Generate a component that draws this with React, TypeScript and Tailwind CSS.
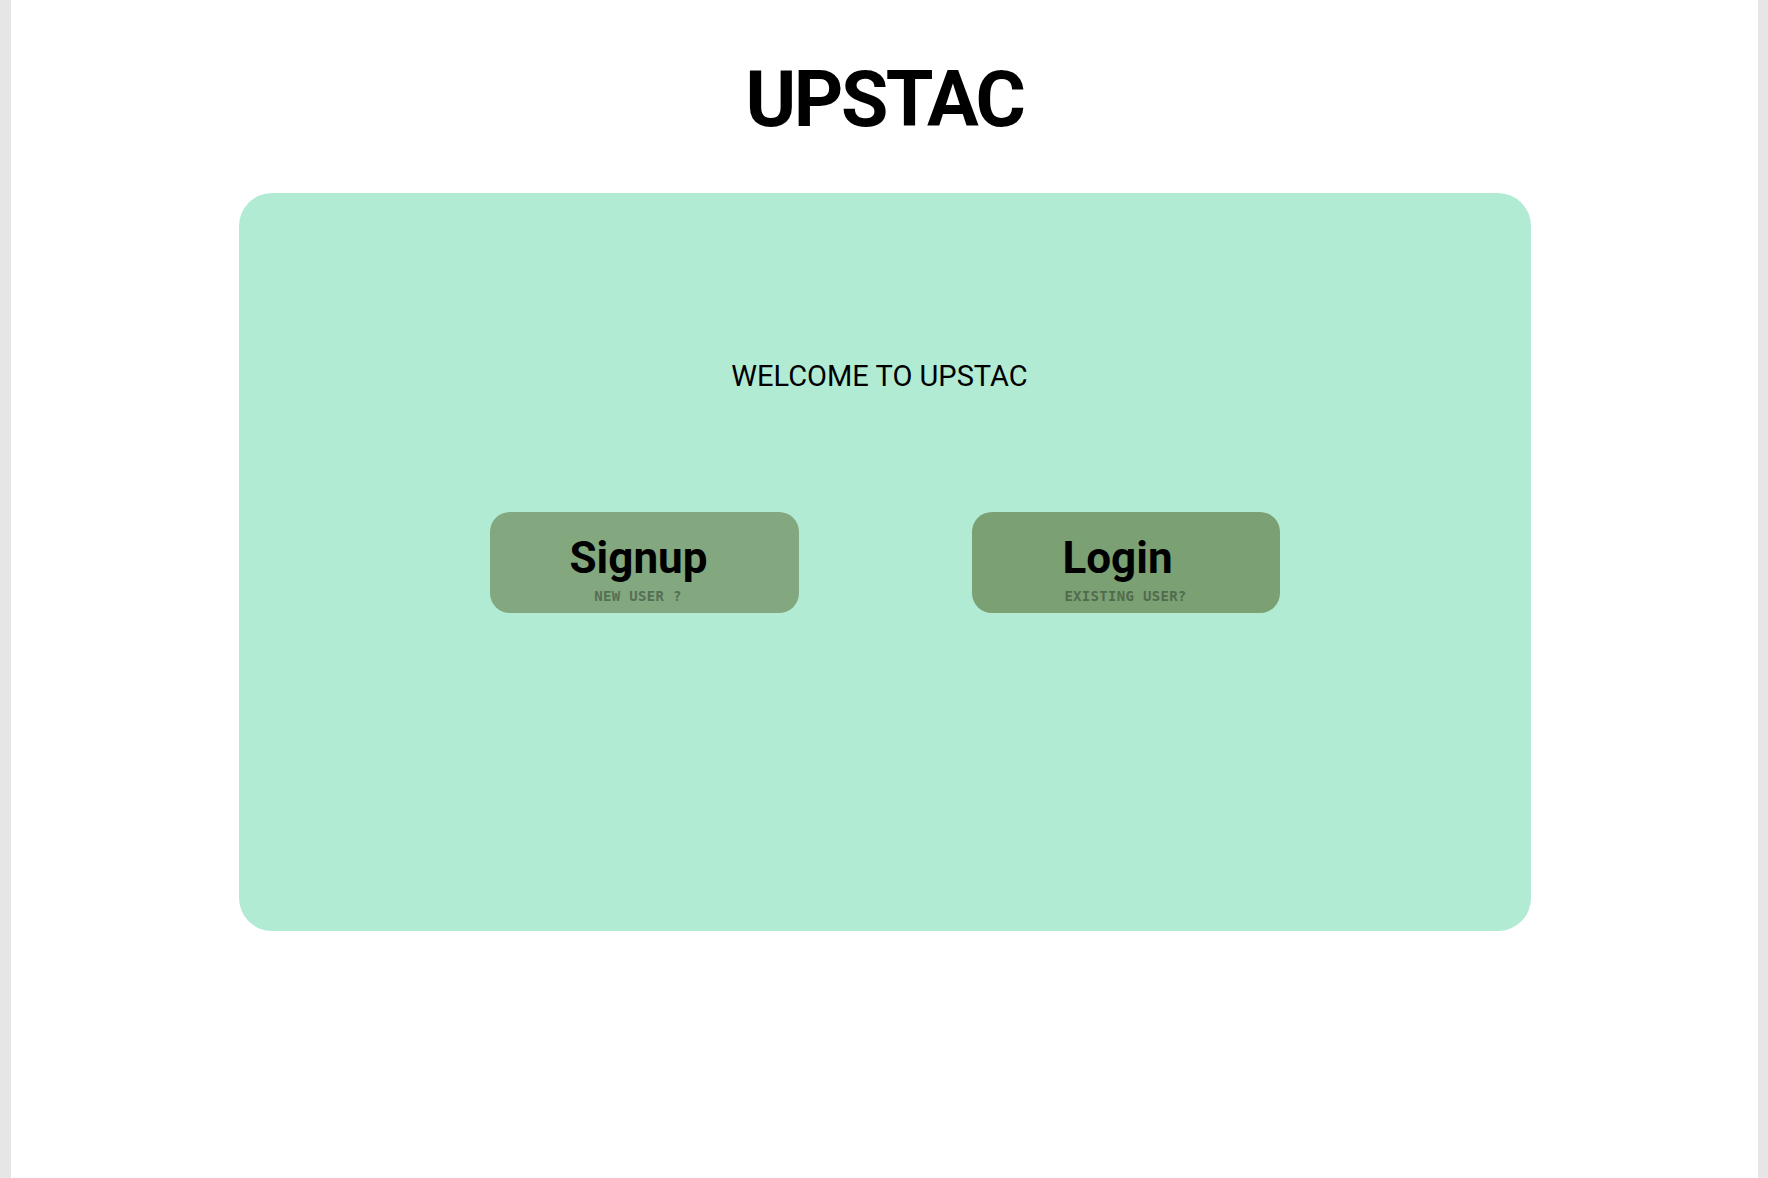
import React from "react";

export default function App() {
  return (
    <div className="flex h-[1178px] w-full bg-white" style={{ fontFamily: "Roboto, 'Liberation Sans', sans-serif" }}>
      <div className="w-[11px] shrink-0 bg-[#e6e6e6]" />
      <div className="flex flex-1 flex-col items-center">
        <h1 className="mt-[55px] text-[77px] font-bold leading-[90px] tracking-[-2.5px] text-black">UPSTAC</h1>
        <div className="mt-[48px] flex h-[738px] w-[1292px] flex-col items-center rounded-[33px] bg-[#b2ebd4] pt-[166px]">
          <p className="pr-[10px] text-[29px] leading-[34px] text-black">WELCOME TO UPSTAC</p>
          <div className="mt-[119px] flex gap-[173px]">
            <button className="flex h-[101px] w-[309px] flex-col items-center rounded-[20px] bg-[#83a77f] pt-[20px]">
              <span className="pr-[11px] text-[44px] font-bold leading-[52px] text-black">Signup</span>
              <span
                className="mt-[4px] pr-[12px] text-[14px] font-bold leading-[16px] tracking-[0.3px] text-[#566f54]"
                style={{ fontFamily: "'DejaVu Sans Mono', 'Liberation Mono', monospace" }}
              >
                NEW USER ?
              </span>
            </button>
            <button className="flex h-[101px] w-[308px] flex-col items-center rounded-[20px] bg-[#7ba074] pt-[20px]">
              <span className="pr-[16px] text-[44px] font-bold leading-[52px] text-black">Login</span>
              <span
                className="mt-[4px] text-[14px] font-bold leading-[16px] tracking-[0.3px] text-[#516b4d]"
                style={{ fontFamily: "'DejaVu Sans Mono', 'Liberation Mono', monospace" }}
              >
                EXISTING USER?
              </span>
            </button>
          </div>
        </div>
      </div>
      <div className="w-[10px] shrink-0 bg-[#e6e6e6]" />
    </div>
  );
}
